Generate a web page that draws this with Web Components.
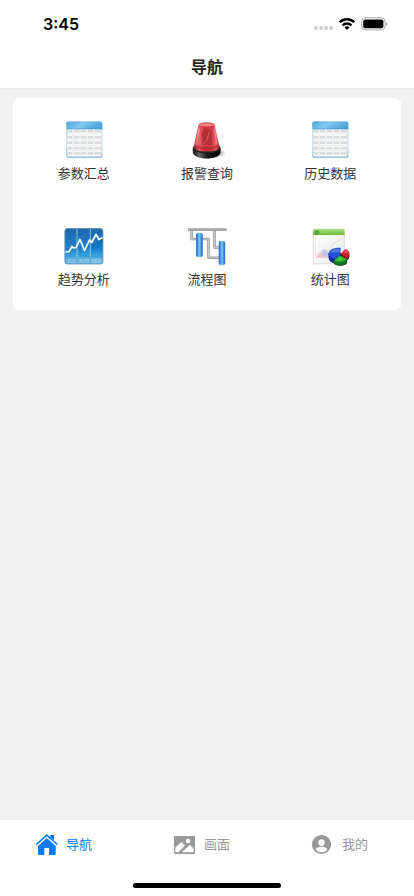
<!DOCTYPE html>
<html lang="zh-CN">
<head>
<meta charset="utf-8">
<meta name="viewport" content="width=device-width, initial-scale=1">
<title>导航</title>
<style>
  html, body { height: 100%; }
  body {
    margin: 0;
    background: #f1f1f1;
    color: #333;
    font-family: "Liberation Sans", "Noto Sans CJK SC", sans-serif;
  }
</style>
</head>
<body>

<app-shell>
  <status-bar slot="top" time="3:45"></status-bar>
  <title-bar slot="top">导航</title-bar>

  <menu-card>
    <menu-item icon="table">参数汇总</menu-item>
    <menu-item icon="siren">报警查询</menu-item>
    <menu-item icon="table">历史数据</menu-item>
    <menu-item icon="trend">趋势分析</menu-item>
    <menu-item icon="flow">流程图</menu-item>
    <menu-item icon="stats">统计图</menu-item>
  </menu-card>

  <tab-bar slot="bottom">
    <tab-item icon="home" active>导航</tab-item>
    <tab-item icon="picture">画面</tab-item>
    <tab-item icon="user">我的</tab-item>
  </tab-bar>
</app-shell>

<script>
  const ICONS = {
    table: `
      <svg viewBox="0 0 40 40" aria-hidden="true">
        <defs>
          <linearGradient id="head" x2="1" y2="0.3">
            <stop offset="0" stop-color="#4ba7db"/><stop offset=".5" stop-color="#80c7eb"/><stop offset="1" stop-color="#4ba5d9"/>
          </linearGradient>
          <linearGradient id="edge" x2="0" y2="1">
            <stop offset="0" stop-color="#9fd0ea"/><stop offset=".7" stop-color="#c3dce9"/><stop offset="1" stop-color="#62acd7"/>
          </linearGradient>
        </defs>
        <rect x="2.8" y="2" width="35.5" height="36.2" rx="2" fill="#000" opacity=".12"/>
        <rect x="2.3" y="1.5" width="36" height="36" rx="2" fill="url(#edge)"/>
        <path d="M3.200 9h34.200v26.600q0 1-1 1H4.200q-1 0-1-1z" fill="#f8f9fa"/>
        <path d="M2.300 9V3.500q0-2 2-2h32q2 0 2 2V9z" fill="url(#head)"/>
        <path d="M3 9h34.600" stroke="#3d95ca" stroke-width=".7"/>
        <path d="M3.200 11.200h34.200M3.200 17.300h34.200M3.200 22.800h34.200M3.200 28.300h34.200M3.200 33.300h34.200" stroke="#dadbdd" stroke-width="2.400"/>
        <path d="M3.200 14h34.200M3.200 20h34.200M3.200 25.600h34.200M3.200 31h34.200" stroke="#e9eaeb" stroke-width=".6"/>
        <path d="M9.300 9.500v27M16.200 9.500v27M23 9.500v27M30.200 9.500v27" stroke="#fff" stroke-width="1.500"/>
        <path d="M9.300 9.500v27M16.200 9.500v27M23 9.500v27M30.200 9.500v27" stroke="#d3d5d7" stroke-width=".5"/>
      </svg>`,
    siren: `
      <svg viewBox="0 0 40 40" aria-hidden="true">
        <defs>
          <linearGradient id="dome">
            <stop offset="0" stop-color="#b31220"/><stop offset=".2" stop-color="#f0626a"/><stop offset=".42" stop-color="#c9303a"/>
            <stop offset=".72" stop-color="#d23c45"/><stop offset=".86" stop-color="#ef6b70"/><stop offset="1" stop-color="#b5111e"/>
          </linearGradient>
          <linearGradient id="base">
            <stop offset="0" stop-color="#111"/><stop offset=".25" stop-color="#686868"/><stop offset=".5" stop-color="#181818"/><stop offset="1" stop-color="#050505"/>
          </linearGradient>
          <radialGradient id="shade"><stop offset="0" stop-opacity=".45"/><stop offset="1" stop-opacity="0"/></radialGradient>
        </defs>
        <ellipse cx="29" cy="33" rx="10.500" ry="5" fill="url(#shade)"/>
        <path d="M5.800 28v4c0 3.600 6.200 6.600 14 6.600s13.800-3 13.800-6.600v-4z" fill="url(#base)"/>
        <ellipse cx="19.700" cy="28" rx="13.900" ry="5.200" fill="#242424"/>
        <path d="M11.400 5C12 3.200 15 2.600 19.500 2.600S27 3.200 27.800 5l4.700 22.300c-1 2.700-6 4.300-12.800 4.300S8 30 6.800 27.300z" fill="url(#dome)"/>
        <path d="M14.500 25V15c0-4 2.400-6 5.200-6s5.200 2 5.200 6v10" fill="#9d2530" opacity=".5"/>
        <path d="M16.500 24c3.500-2 4.500-6 5.500-12" fill="none" stroke="#de6268" stroke-width="1.300" opacity=".7"/>
        <path d="M9 24.500c5 3.600 16 3.800 21.500 0l1 3c-6 3.500-18 3.500-23.500 0z" fill="#a5222d" opacity=".5"/>
        <ellipse cx="19.600" cy="4.800" rx="7.200" ry="1.600" fill="#ee8286"/>
        <path d="M12 8.500L9.200 25" stroke="#ffb3b3" stroke-width="1.500" opacity=".6"/>
        <path d="M27.500 9L30 24" stroke="#ffb3b3" stroke-width="1" opacity=".5"/>
      </svg>`,
    trend: `
      <svg viewBox="0 0 40 40" aria-hidden="true">
        <defs>
          <linearGradient id="sky" x2="0" y2="1">
            <stop offset="0" stop-color="#0b5ba6"/><stop offset=".5" stop-color="#1478c5"/><stop offset=".75" stop-color="#36a0dc"/><stop offset="1" stop-color="#4cabe0"/>
          </linearGradient>
        </defs>
        <rect x=".9" y="2.600" width="38" height="35.400" rx="2.500" fill="url(#sky)" stroke="#5a86a8" stroke-width=".8"/>
        <path d="M1.500 22C15 23 30 18 38.500 12v-7q0-2-2-2h-33q-2 0-2 2z" fill="#fff" opacity=".07"/>
        <rect x="1.300" y="31.500" width="37.200" height="6" rx="1.500" fill="#7dbbe0" opacity=".55"/>
        <path d="M13 3v28.500M26.300 3v28.500" stroke="#a7d0ec" stroke-width=".8"/>
        <path d="M1.500 26L5 25.600 8 20.500 9.500 22 12 21.500 16 13.500l4.500 11 5-10.500 2.200 2.500L32 8.500l3 5 3.500-2" fill="none" stroke="#fff" stroke-width="1.700" stroke-linejoin="round"/>
        <g fill="#b9dcf1" font-family="Liberation Sans, sans-serif" font-size="5" text-anchor="middle">
          <text x="7.500" y="36.500">JUL</text><text x="20" y="36.500">AUG</text><text x="32.300" y="36.500">SEP</text>
        </g>
      </svg>`,
    flow: `
      <svg viewBox="0 0 40 40" aria-hidden="true">
        <defs>
          <linearGradient id="tube">
            <stop offset="0" stop-color="#2a62bd"/><stop offset=".2" stop-color="#3a86e0"/><stop offset=".5" stop-color="#7cc7f8"/><stop offset=".8" stop-color="#3a86e0"/><stop offset="1" stop-color="#2a62bd"/>
          </linearGradient>
        </defs>
        <g fill="none" stroke-linejoin="round">
          <path d="M4.500 4v9h6M15 13h6.500v18.700H33M27.500 4v17.500H33" stroke="#939393" stroke-width="2.600"/>
          <path d="M4.500 4v9h6M15 13h6.500v18.700H33M27.500 4v17.500H33" stroke="#cfcfcf" stroke-width="1.100"/>
        </g>
        <rect x="1" y="2.300" width="38.500" height="2.600" fill="#969696"/>
        <path d="M1 3.300h38.500" stroke="#bdbdbd" stroke-width=".8"/>
        <rect x="9.100" y="7" width="6.700" height="24" rx="2" fill="url(#tube)"/>
        <rect x="31.700" y="15" width="6.500" height="24" rx="2" fill="url(#tube)"/>
      </svg>`,
    stats: `
      <svg viewBox="0 0 40 40" aria-hidden="true">
        <defs>
          <linearGradient id="green" x2="0" y2="1"><stop offset="0" stop-color="#a5df80"/><stop offset="1" stop-color="#6bbd35"/></linearGradient>
          <linearGradient id="page" x2="1" y2="1"><stop offset="0" stop-color="#fff"/><stop offset="1" stop-color="#e8eaeb"/></linearGradient>
        </defs>
        <rect x="3.200" y="3.200" width="31" height="34.600" rx="1" fill="url(#page)" stroke="#c5c8ca" stroke-width=".6"/>
        <path d="M3 9V4q0-1 1-1h29.500q1 0 1 1v5z" fill="url(#green)"/>
        <circle cx="7" cy="6.500" r="2.200" fill="#4e9532"/><circle cx="7" cy="6.500" r=".8" fill="#80bd62"/>
        <path d="M5.500 11v20.500H21" fill="none" stroke="#c9cccf" stroke-width=".5" stroke-dasharray="1 1"/>
        <path d="M5.500 31.500l5-5 3 3 4-4 3 3v3z" fill="#f2b7be" opacity=".8"/>
        <ellipse cx="14.500" cy="27" rx="3" ry="3.700" fill="#b3c3ee" opacity=".85"/>
        <path d="M6 29l5-4 4 2 9-10 4-2 4-3" fill="none" stroke="#efc3c8" stroke-width=".6"/>
        <!-- pie: dark body, then the three slices -->
        <path d="M18.700 27v4.500c0 3 2.400 5 5.400 5.800v.4c3.300 2.900 9.600 2.900 12.800-.2v-3.300c1.500-1 2.300-2.200 2.300-3.800V27z" fill="#10204a"/>
        <path d="M18.700 27v4c0 3 2.500 5 5.600 5.900L29.500 30z" fill="#10269a"/>
        <path d="M30.800 21.800c-6.800-.4-12.100 1.800-12.100 5.700 0 2.600 2.300 4.500 5.600 5.400l5.700-4z" fill="#2352dc"/>
        <path d="M29.500 22.700c-5 0-9.300 1.500-9.500 3.800l9.500-.6z" fill="#6a98f4" opacity=".6"/>
        <path d="M30.500 28l8.700-1.500v3.700c0 1.600-1 2.700-2.500 3.700z" fill="#960f16"/>
        <path d="M30.500 28l4.900-5c2.500.8 3.800 2.200 3.800 4.200 0 1.600-1 3-2.500 3.900z" fill="#d9202a"/>
        <path d="M33.500 26.500l2.200-2.200c1.500.6 2.200 1.500 2.300 2.500z" fill="#f27a78" opacity=".7"/>
        <path d="M23.800 34v3.400c3.300 2.900 9.600 2.900 12.800-.4v-3.500z" fill="#10721a"/>
        <path d="M29.900 29.300l6.900 3.900c-3.200 3-9.600 3.500-13 1z" fill="#2cb034"/>
        <path d="M30 31l3.500 2.300c-2 .9-4.600 1.100-6.800.6z" fill="#65d35d" opacity=".6"/>
      </svg>`,
    home: `
      <svg viewBox="0 0 24 24" aria-hidden="true" fill="currentColor">
        <path d="M15.200 2.300h3.800v6l-3.800-3.500z"/>
        <path d="M1.300 11.600L11.800 2.200l10.500 9.400" fill="none" stroke="#fff" stroke-width="3.800"/>
        <path d="M15.400 2.300h3.600v5l-3.600-3.200z"/>
        <path d="M1.300 11.500L11.800 2.100l10.500 9.400" fill="none" stroke="currentColor" stroke-width="1.600"/>
        <path d="M11.800 5l8.900 8V21q0 1-1 1H14v-7H9.300v7H4q-1 0-1-1v-8z"/>
      </svg>`,
    picture: `
      <svg viewBox="0 0 24 24" aria-hidden="true">
        <rect x="1" y="3" width="21" height="18" rx="1" fill="currentColor"/>
        <circle cx="15" cy="8" r="2.300" fill="#fff"/>
        <path d="M2.300 19.300v-4.600L8.300 9l3.700 3.500-6.600 6.800zM8.600 19.300l8.400-7.500 3.700 4.200v3.300z" fill="#fff"/>
      </svg>`,
    user: `
      <svg viewBox="0 0 24 24" aria-hidden="true">
        <circle cx="10.500" cy="11.500" r="9.600" fill="currentColor"/>
        <ellipse cx="10.500" cy="9.600" rx="3.200" ry="3.400" fill="#fff"/>
        <path d="M4.700 16.700c0-2 3-3 5.800-3s5.800 1 5.800 3c-1.400 1.700-3.500 2.500-5.800 2.500s-4.400-.8-5.800-2.500z" fill="#fff"/>
      </svg>`
  };

  customElements.define('app-shell',
    class extends HTMLElement {
      constructor() {
        super();
        this.attachShadow({mode: 'open'}).innerHTML = `
          <style>
            :host { display: flex; flex-direction: column; height: 100%; }
            header, footer { flex: none; background: #fff; }
            header { box-shadow: 0 1px 0 #ebebeb; }
            main { flex: 1; min-height: 0; overflow: auto; padding: 10px 13px; }
          </style>
          <header><slot name="top"></slot></header>
          <main><slot></slot></main>
          <footer><slot name="bottom"></slot></footer>
        `;
      }
    }
  );

  customElements.define('status-bar',
    class extends HTMLElement {
      constructor() {
        super();
        this.attachShadow({mode: 'open'}).innerHTML = `
          <style>
            :host {
              display: flex;
              align-items: center;
              justify-content: space-between;
              box-sizing: border-box;
              height: 44px;
              padding: 4px 26px 0 43px;
              color: #000;
            }
            time { font: 600 16px/20px Inter, sans-serif; }
            div { display: flex; align-items: center; gap: 6px; }
            svg { display: block; }
          </style>
          <time></time>
          <div>
            <svg width="19" height="14" fill="#cbcbcb" aria-hidden="true">
              <circle cx="2" cy="11" r="1.900"/><circle cx="7" cy="11" r="1.900"/><circle cx="12" cy="11" r="1.900"/><circle cx="17" cy="11" r="1.900"/>
            </svg>
            <svg width="16" height="14" viewBox="0 0 16 14" fill="none" stroke="#000" stroke-width="2.400" aria-hidden="true">
              <path d="M.8 5.200a10.300 10.300 0 0 1 14.400 0M3.500 8.300a6.400 6.400 0 0 1 9 0"/>
              <path d="M8 13L5.600 10.500a3.500 3.500 0 0 1 4.800 0z" fill="#000" stroke="none"/>
            </svg>
            <svg width="27" height="14" viewBox="0 0 27 14" aria-hidden="true">
              <rect x=".6" y=".8" width="23.400" height="12" rx="3.500" fill="none" stroke="#a8a8a8"/>
              <rect x="2.200" y="2.400" width="20.200" height="8.800" rx="1.800"/>
              <path d="M25.200 5v3.800q1.200-.6 1.200-1.900t-1.200-1.900z" fill="#999"/>
            </svg>
          </div>
        `;
        this.shadowRoot.querySelector('time').textContent = this.getAttribute('time');
      }
    }
  );

  customElements.define('title-bar',
    class extends HTMLElement {
      constructor() {
        super();
        this.attachShadow({mode: 'open'}).innerHTML = `
          <style>
            :host { display: block; padding-top: 4px; }
            h1 { margin: 0; font-size: 16px; line-height: 40px; font-weight: 700; text-align: center; color: #222; }
          </style>
          <h1><slot></slot></h1>
        `;
      }
    }
  );

  customElements.define('menu-card',
    class extends HTMLElement {
      constructor() {
        super();
        this.attachShadow({mode: 'open'}).innerHTML = `
          <style>
            :host { display: block; background: #fff; border-radius: 6px; }
            nav { display: grid; grid-template-columns: repeat(3, 1fr); padding: 0 9px; }
          </style>
          <nav><slot></slot></nav>
        `;
      }
    }
  );

  customElements.define('menu-item',
    class extends HTMLElement {
      constructor() {
        super();
        this.attachShadow({mode: 'open'}).innerHTML = `
          <style>
            :host { display: block; }
            a {
              display: flex;
              flex-direction: column;
              align-items: center;
              gap: 4px;
              padding: 22px 0 20px;
              color: #333;
              font-size: 13px;
              line-height: 20px;
              text-decoration: none;
            }
            svg { display: block; width: 40px; height: 40px; }
          </style>
          <a href="#">${ICONS[this.getAttribute('icon')]}<span><slot></slot></span></a>
        `;
      }
    }
  );

  customElements.define('tab-bar',
    class extends HTMLElement {
      constructor() {
        super();
        this.attachShadow({mode: 'open'}).innerHTML = `
          <style>
            :host { display: block; padding-bottom: 8px; }
            nav { display: grid; grid-template-columns: repeat(3, 1fr); }
            /* home indicator */
            div { width: 148px; height: 5px; margin: 13px auto 0; border-radius: 3px; background: #000; }
          </style>
          <nav><slot></slot></nav>
          <div></div>
        `;
      }
    }
  );

  customElements.define('tab-item',
    class extends HTMLElement {
      constructor() {
        super();
        this.attachShadow({mode: 'open'}).innerHTML = `
          <style>
            :host { display: block; color: #999; }
            :host([active]) { color: #007aff; }
            button {
              display: flex;
              align-items: center;
              justify-content: center;
              gap: 7px;
              width: 100%;
              height: 50px;
              padding: 0 11px 0 0;
              border: 0;
              background: none;
              color: inherit;
              font-family: inherit;
              font-size: 13px;
              line-height: 20px;
            }
            svg { display: block; width: 24px; height: 24px; }
          </style>
          <button type="button">${ICONS[this.getAttribute('icon')]}<span><slot></slot></span></button>
        `;
      }
    }
  );
</script>
</body>
</html>
